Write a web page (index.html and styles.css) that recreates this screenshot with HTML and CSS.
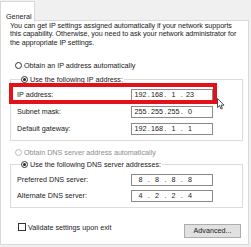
FILE: index.html
```html
<!DOCTYPE html>
<html>
<head>
<meta charset="utf-8">
<link rel="stylesheet" href="styles.css">
</head>
<body>
<div class="tabs"><div class="tab">General</div></div>
<div class="panel">
  <p class="intro">You can get IP settings assigned automatically if your network supports this capability. Otherwise, you need to ask your network administrator for the appropriate IP settings.</p>
  <div class="opt opt-first"><span class="radio"></span>Obtain an IP address automatically</div>
  <fieldset class="group group-ip">
    <legend><span class="radio checked"></span>Use the following IP address:</legend>
    <div class="row"><span class="lbl">IP address:</span><div class="ip"><span>192</span><i>.</i><span>168</span><i>.</i><span>1</span><i>.</i><span>23</span></div></div>
    <div class="row"><span class="lbl">Subnet mask:</span><div class="ip"><span>255</span><i>.</i><span>255</span><i>.</i><span>255</span><i>.</i><span>0</span></div></div>
    <div class="row row-last"><span class="lbl">Default gateway:</span><div class="ip"><span>192</span><i>.</i><span>168</span><i>.</i><span>1</span><i>.</i><span>1</span></div></div>
    <div class="highlight"></div>
    <svg class="cursor" width="8" height="12" viewBox="0 0 8 12"><path d="M0.5 0.5 L0.5 9.5 L2.6 7.6 L4 11 L5.4 10.4 L4 7.2 L7 7.2 Z" fill="#fff" stroke="#222" stroke-width="0.8" stroke-linejoin="round"/></svg>
  </fieldset>
  <div class="opt opt-dis"><span class="radio disabled"></span>Obtain DNS server address automatically</div>
  <fieldset class="group group-dns">
    <legend><span class="radio checked"></span>Use the following DNS server addresses:</legend>
    <div class="row"><span class="lbl">Preferred DNS server:</span><div class="ip"><span>8</span><i>.</i><span>8</span><i>.</i><span>8</span><i>.</i><span>8</span></div></div>
    <div class="row row-last"><span class="lbl">Alternate DNS server:</span><div class="ip"><span>4</span><i>.</i><span>2</span><i>.</i><span>2</span><i>.</i><span>4</span></div></div>
  </fieldset>
  <div class="bottom">
    <label class="check"><span class="box"></span>Validate settings upon exit</label>
    <button class="btn">Advanced...</button>
  </div>
</div>
</body>
</html>
```
FILE: styles.css
```css
* { box-sizing: border-box; }
html, body { margin: 0; padding: 0; }
body {
  background: #f0f0f0;
  font-family: "Liberation Sans", Arial, sans-serif;
  font-size: 7.2px;
  color: #1a1a1a;
  width: 251px;
  height: 247px;
  overflow: hidden;
}
.tabs { height: 21px; display: flex; align-items: flex-end; }
.tab {
  width: 35px;
  height: 21px;
  background: #fff;
  border: 1px solid #d9d9d9;
  border-bottom: none;
  padding: 10px 0 0 5px;
  line-height: 9px;
  position: relative;
  z-index: 1;
  margin-bottom: -1px;
}
.panel {
  width: 249px;
  height: 225px;
  background: #fff;
  border: 1px solid #d9d9d9;
  margin-top: -1px;
  padding: 0 6px 0 9px;
}
.intro { margin: 0; line-height: 8.3px; padding-top: 1px; letter-spacing: -0.06px; }
.opt {
  display: flex;
  align-items: center;
  height: 9px;
  line-height: 9px;
  padding-left: 5px;
}
.opt-first { margin-top: 14px; }
.opt-dis { margin-top: 7px; color: #8d8d8d; }
.radio {
  width: 7px;
  height: 7px;
  border: 1px solid #333;
  border-radius: 50%;
  margin-right: 2px;
  background: #fff;
  flex: none;
  position: relative;
}
.radio.checked::after {
  content: "";
  position: absolute;
  left: 1px; top: 1px;
  width: 3px; height: 3px;
  border-radius: 50%;
  background: #222;
}
.radio.disabled { border-color: #bcbcbc; }
.group {
  margin: 5px 0 0 0;
  width: 233px;
  border: 1px solid #dcdcdc;
  padding: 5px 6px 5px 6px;
  position: relative;
}
.group-dns { margin-top: 3px; padding-top: 5px; }
.group legend {
  display: flex;
  align-items: center;
  height: 9px;
  line-height: 9px;
  padding: 0 1px 0 0;
  margin-left: 4px;
  background: #fff;
}
.row {
  display: flex;
  align-items: center;
  height: 12px;
  margin-bottom: 5px;
}
.group-dns .row { margin-bottom: 4px; }
.group .row-last { margin-bottom: 0; }
.lbl { width: 114px; flex: none; }
.ip {
  width: 82px;
  height: 12px;
  border: 1px solid #8a8a8a;
  display: flex;
  align-items: center;
  padding-left: 2px;
  line-height: 10px;
}
.ip span { width: 13px; text-align: center; }
.ip i { font-style: normal; width: 3.5px; text-align: center; }
.highlight {
  position: absolute;
  left: -2px;
  top: -1px;
  width: 208px;
  height: 21px;
  border: 4px solid #e4101a;
}
.cursor {
  position: absolute;
  left: 206px;
  top: 14px;
}
.bottom {
  display: flex;
  justify-content: space-between;
  align-items: flex-start;
  margin-top: 15px;
  padding-left: 8px;
  padding-right: 1px;
}
.check {
  display: flex;
  align-items: center;
  height: 9px;
  line-height: 9px;
}
.box {
  width: 8px;
  height: 8px;
  border: 1px solid #333;
  margin-right: 2px;
  background: #fff;
}
.btn {
  width: 57px;
  height: 14px;
  margin-top: 1px;
  background: #e1e1e1;
  border: 1px solid #adadad;
  font-family: inherit;
  font-size: 7.2px;
  color: #1a1a1a;
  padding: 0;
  line-height: 12px;
}
```
